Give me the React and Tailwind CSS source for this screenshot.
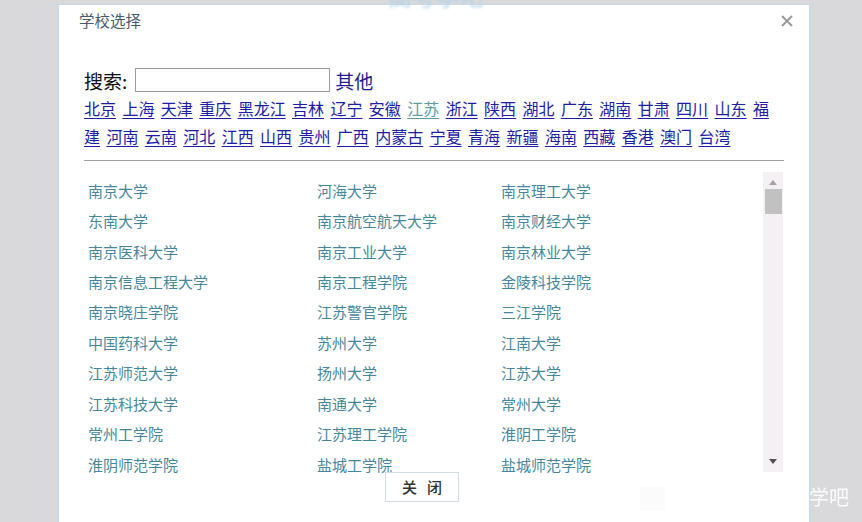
const rowOne = ["北京", "上海", "天津", "重庆", "黑龙江", "吉林", "辽宁", "安徽", "江苏", "浙江", "陕西", "湖北", "广东", "湖南", "甘肃", "四川", "山东", "福"];
const rowTwo = ["建", "河南", "云南", "河北", "江西", "山西", "贵州", "广西", "内蒙古", "宁夏", "青海", "新疆", "海南", "西藏", "香港", "澳门", "台湾"];

const schools = [
  "南京大学", "河海大学", "南京理工大学",
  "东南大学", "南京航空航天大学", "南京财经大学",
  "南京医科大学", "南京工业大学", "南京林业大学",
  "南京信息工程大学", "南京工程学院", "金陵科技学院",
  "南京晓庄学院", "江苏警官学院", "三江学院",
  "中国药科大学", "苏州大学", "江南大学",
  "江苏师范大学", "扬州大学", "江苏大学",
  "江苏科技大学", "南通大学", "常州大学",
  "常州工学院", "江苏理工学院", "淮阴工学院",
  "淮阴师范学院", "盐城工学院", "盐城师范学院",
];

const font = { fontFamily: '"Noto Sans CJK SC", "Noto Sans", sans-serif' };

function ProvinceRow({ items }) {
  return (
    <div className="flex h-[28px] items-center gap-[6.4px] text-[16px] leading-none">
      {items.map((p) => (
        <a
          key={p}
          href="#"
          className={
            "underline underline-offset-[3px] " +
            (p === "江苏" ? "text-[#5b9ea3]" : "text-[#1d1da6]")
          }
        >
          {p}
        </a>
      ))}
    </div>
  );
}

export default function App() {
  return (
    <div className="relative h-[522px] w-full overflow-hidden bg-[#d9d9dc]" style={font}>
      {/* faint watermark at top */}
      <div className="absolute left-[388px] top-[-22px] z-10 text-[24px] font-bold text-[#a9cfe9] opacity-50 blur-[1px]">
        高考学吧
      </div>

      <div className="ml-[57px] mt-[4px] h-[540px] w-[754px] border-x-2 border-t border-[#c9d9e8] bg-white">
        <div className="flex h-[32px] items-center justify-between pl-[20px] pr-[16px]">
          <span className="text-[15.5px] text-[#4a5a6a]">学校选择</span>
          <svg width="12" height="12" viewBox="0 0 12 12" className="text-[#9a9a9a]">
            <path d="M1 1L11 11M11 1L1 11" stroke="currentColor" strokeWidth="2" />
          </svg>
        </div>

        <div className="px-[25px]">
          <div className="mt-[31px] flex h-[24px] items-center text-[19px] leading-none">
            <span className="text-[#111]">搜索:</span>
            <input className="ml-[8px] h-[24px] w-[195px] border border-[#9a9a9a] bg-white outline-none" />
            <span className="ml-[5px] text-[#1d1d8c]">其他</span>
          </div>

          <div className="mt-[2px]">
            <ProvinceRow items={rowOne} />
            <ProvinceRow items={rowTwo} />
          </div>

          <div className="mt-[10px] border-t border-[#a0a0a0]" />

          <div className="mt-[11px] flex h-[300px]">
            <div className="flex-1 pl-[4px] pt-[3px]">
              <div className="grid grid-cols-[229px_184px_1fr]">
                {schools.map((s) => (
                  <div key={s} className="flex h-[30.44px] items-center text-[15px] leading-none text-[#46889a]">
                    {s}
                  </div>
                ))}
              </div>
            </div>
            <div className="mr-[1px] flex w-[20px] flex-col items-center bg-[#f5f0f3] pb-[8px] pt-[8px]">
              <svg width="8" height="5" viewBox="0 0 8 5">
                <path d="M0 5L4 0L8 5Z" fill="#a3a3a3" />
              </svg>
              <div className="mt-[4px] h-[25px] w-[17px] bg-[#c1c1c1]" />
              <div className="flex-1" />
              <svg width="8" height="5" viewBox="0 0 8 5">
                <path d="M0 0L8 0L4 5Z" fill="#505050" />
              </svg>
            </div>
          </div>

          <button className="relative ml-[301px] flex h-[30px] w-[74px] items-center justify-center gap-[10px] border border-[#d3dbe3] bg-white text-[15px] font-medium text-[#333]">
            <span>关</span>
            <span>闭</span>
          </button>
        </div>
      </div>

      {/* bottom watermark */}
      <div className="absolute left-[640px] top-[487px] h-[24px] w-[25px] bg-[#f7f7f7] opacity-50" />
      <div className="absolute left-[809px] top-[485px] text-[20px] leading-[24px] text-white opacity-90">
        学吧
      </div>
    </div>
  );
}
